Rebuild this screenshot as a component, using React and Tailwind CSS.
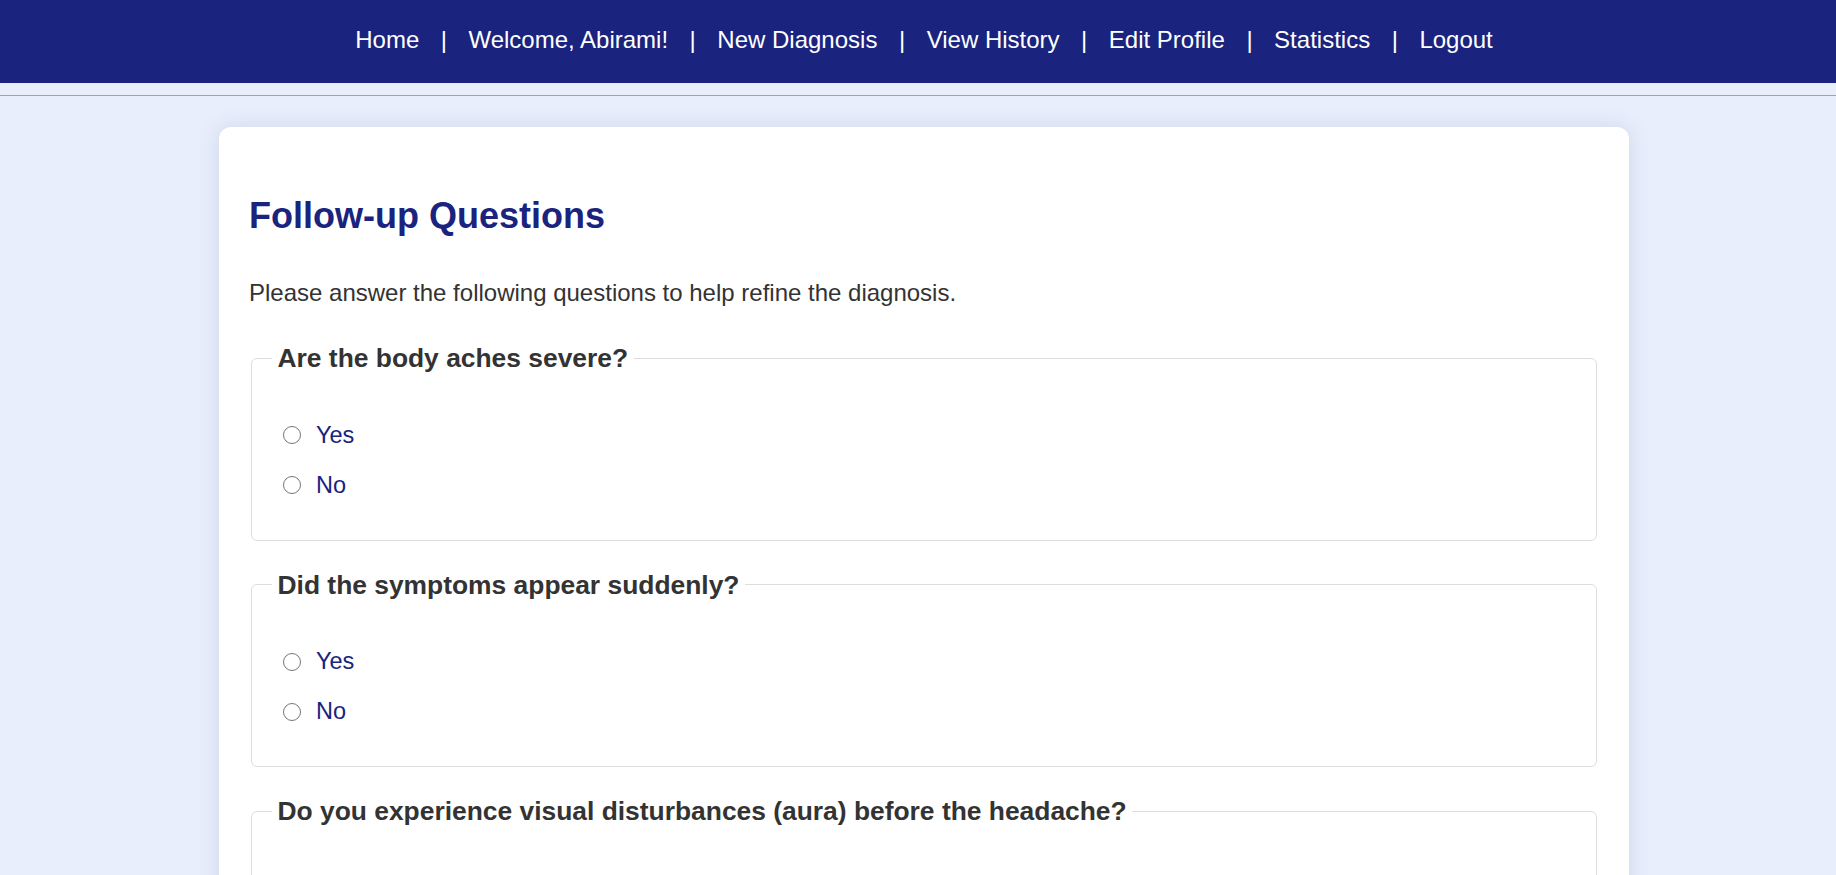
import React from "react";

const links = ["Home", "Welcome, Abirami!", "New Diagnosis", "View History", "Edit Profile", "Statistics", "Logout"];

const questions = [
  "Are the body aches severe?",
  "Did the symptoms appear suddenly?",
  "Do you experience visual disturbances (aura) before the headache?",
];

function Question({ q, idx }) {
  return (
    <fieldset className="mx-[2px] mb-[29px] rounded-[6px] border border-[#dddddd] px-[20px] pb-[41px]">
      <legend className="px-[5.5px] text-[26.4px] font-bold leading-[30px] text-[#333333]">{q}</legend>
      <div className="mt-[48.5px] flex flex-col gap-[23px]">
        {["Yes", "No"].map((opt) => (
          <label key={opt} className="flex h-[27px] items-center">
            <input
              type="radio"
              name={"q" + idx}
              className="m-0 ml-[11px] h-[18px] w-[18px]"
            />
            <span className="ml-[15px] text-[23.5px] leading-[27px] text-[#1a237e]">{opt}</span>
          </label>
        ))}
      </div>
    </fieldset>
  );
}

export default function App() {
  return (
    <div
      className="min-h-screen bg-[#e8eefb]"
      style={{ fontFamily: '"Liberation Sans", Arial, sans-serif' }}
    >
      <nav className="flex h-[83px] items-start justify-center bg-[#1a237e] pl-[12px] pt-[26px] text-[24px] leading-[28px] text-white">
        {links.map((l, i) => (
          <React.Fragment key={l}>
            {i > 0 && <span className="mx-[21.5px]">|</span>}
            <a className="cursor-pointer">{l}</a>
          </React.Fragment>
        ))}
      </nav>
      <div className="h-[12px]" />
      <div className="h-px bg-[#a3a3a3]" />
      <div className="pt-[31px] pb-[40px]">
        <div className="ml-[219px] w-[1410px] rounded-[12px] bg-white px-[30px] pt-[68px] pb-[20px] shadow-[0_0_22px_rgba(40,60,120,0.13)]">
          <h2 className="text-[36px] font-bold leading-[41px] text-[#1a237e]">Follow-up Questions</h2>
          <p className="mt-[43px] mb-[36px] text-[24px] leading-[28px] text-[#333333]">
            Please answer the following questions to help refine the diagnosis.
          </p>
          {questions.map((q, i) => (
            <Question key={q} q={q} idx={i} />
          ))}
        </div>
      </div>
    </div>
  );
}
